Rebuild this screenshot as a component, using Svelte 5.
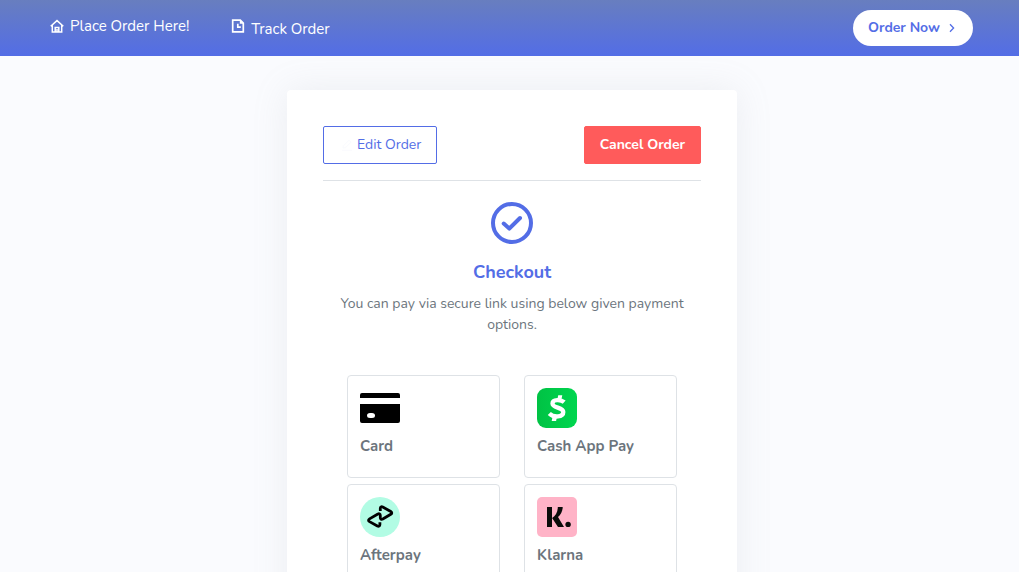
<script>
  const links = [
    { label: 'Place Order Here!', icon: 'home' },
    { label: 'Track Order', icon: 'file' }
  ];

  const payments = [
    { id: 'card', label: 'Card' },
    { id: 'cashapp', label: 'Cash App Pay' },
    { id: 'afterpay', label: 'Afterpay' },
    { id: 'klarna', label: 'Klarna' }
  ];
</script>

<header class="topbar">
  <nav>
    {#each links as link}
      <a class="nav-link {link.icon}" href="#{link.icon}">
        {#if link.icon === 'home'}
          <svg width="14" height="14" viewBox="0 0 14 14" fill="none" stroke="currentColor" stroke-width="1.5">
            <path d="M.7 7.2 7 1.6l6.3 5.6M2.3 6v6.9h9.4V6M5.2 12.9V8.6h3.6v4.3M7 10v3" />
          </svg>
        {:else}
          <svg width="14" height="14" viewBox="0 0 14 14" fill="none" stroke="currentColor" stroke-width="1.7">
            <path d="M1.7 1.2h7.6l3 3v8.6H1.7zM6.8 4.7v3.5h3" />
            <path d="M8.8 1v3.8h3.7" fill="currentColor" stroke="none" />
          </svg>
        {/if}
        <span>{link.label}</span>
      </a>
    {/each}
  </nav>
  <a class="order-now" href="#order">
    Order Now
    <svg width="8" height="10" viewBox="0 0 8 10" fill="none" stroke="currentColor" stroke-width="1.3">
      <path d="m2 1.3 3.6 3.7L2 8.7" />
    </svg>
  </a>
</header>

<main>
  <section class="card">
    <div class="actions">
      <button class="btn outline" type="button">
        <svg width="12" height="12" viewBox="0 0 12 12" fill="none" stroke="currentColor">
          <path d="M1 11.3h10M2 9l.4-2.2L8 1.2l2 2-5.6 5.4z" />
        </svg>
        Edit Order
      </button>
      <button class="btn danger" type="button">Cancel Order</button>
    </div>

    <div class="intro">
      <svg width="42" height="42" viewBox="0 0 42 42" fill="none" stroke="currentColor" stroke-width="4">
        <circle cx="21" cy="21" r="19" />
        <path d="m12.7 21.5 5.6 5.1L29 16" stroke-linecap="round" stroke-linejoin="round" />
      </svg>
      <h1>Checkout</h1>
      <p>You can pay via secure link using below given payment options.</p>
    </div>

    <div class="options">
      {#each payments as payment}
        <button class="option" type="button">
          <svg width="40" height="40" viewBox="0 0 40 40">
            {#if payment.id === 'card'}
              <path d="M0 10V7q0-2 2-2h36q2 0 2 2v3zM0 16h40v17q0 2-2 2H2q-2 0-2-2z" />
              <rect x="7" y="20" width="8" height="5" rx="3" fill="#fff" transform="translate(0 5)" />
            {:else if payment.id === 'cashapp'}
              <defs>
                <linearGradient id="cash">
                  <stop stop-color="#00c244" />
                  <stop offset="1" stop-color="#00d64f" />
                </linearGradient>
              </defs>
              <rect width="40" height="40" rx="9" fill="url(#cash)" />
              <path
                d="M27.2 14.2c-3-2.7-11.7-3.2-11.7 1.2 0 5 10.8 3.4 10.8 8.7 0 5.4-9.8 5.7-14 1.4"
                fill="none" stroke="#fff" stroke-width="4.3" stroke-linejoin="round"
              />
              <path d="m21.2 7.2 4.1.1-.9 4.2-4-.2zM15.7 28.1l4.3.5-.9 4.4h-4.4z" fill="#fff" />
            {:else if payment.id === 'afterpay'}
              <circle cx="20" cy="20" r="20" fill="#b2fce4" />
              <path
                d="M20.3 14v-2.6c0-1.5 1.1-2.1 2.4-1.4l8.1 4.5c1.3.8 1.3 2 0 2.8l-8 4.7c-1.3.7-2.5.1-2.5-1.3v-2.3c0-1.5-1.1-2.2-2.4-1.4l-8.4 4.9c-1.3.8-1.3 1.9 0 2.7l7.9 4.4c1.3.7 2.5.1 2.5-1.4v-2.3"
                fill="none" stroke="#000" stroke-width="2.8" stroke-linejoin="round"
              />
            {:else}
              <rect width="40" height="40" rx="5" fill="#ffb3c7" />
              <rect x="10" y="10" width="5" height="20" fill="#0a0b09" />
              <path d="M20.8 10h4.9c0 4-1.8 7.6-4.7 10l6 10h-6l-5.9-9c3.5-2.1 5.7-6 5.7-11z" fill="#0a0b09" />
              <circle cx="31.1" cy="27.4" r="2.7" fill="#0a0b09" />
            {/if}
          </svg>
          <span>{payment.label}</span>
        </button>
      {/each}
    </div>
  </section>
</main>

<style>
  :global(body) {
    background: #fafbfe;
    color: #6c757d;
    font-family: Nunito, Lato, sans-serif;
    font-size: 15px;
    line-height: 21px;
  }

  svg {
    display: block;
    flex: none;
  }

  button {
    font: inherit;
    cursor: pointer;
  }

  .topbar {
    display: flex;
    justify-content: space-between;
    align-items: center;
    box-sizing: border-box;
    height: 56px;
    padding: 0 46px 0 50px;
    background: linear-gradient(#687ebf, #536de6);
  }

  nav {
    display: flex;
    align-items: center;
    gap: 42px;
  }

  .nav-link {
    display: flex;
    align-items: center;
    gap: 6px;
    color: #fff;
    text-decoration: none;
    padding-bottom: 4px;
  }

  .nav-link.file {
    align-items: flex-start;
    padding: 2px 0 0;
  }

  .order-now {
    display: flex;
    align-items: center;
    gap: 8px;
    padding: 8px 17px 8px 15px;
    border-radius: 20px;
    background: #fff;
    color: #536de6;
    font-size: 14px;
    font-weight: 700;
    line-height: 20px;
    text-decoration: none;
  }

  main {
    display: flex;
    justify-content: center;
    padding: 34px 0 34px 5px;
  }

  .card {
    box-sizing: border-box;
    width: 100%;
    max-width: 450px;
    padding: 36px;
    border-radius: 4px;
    background: #fff;
    box-shadow: 0 0 35px 0 rgba(154, 161, 171, 0.15);
  }

  .actions {
    display: flex;
    justify-content: space-between;
    padding-bottom: 16px;
    border-bottom: 1px solid #dee2e6;
  }

  .btn {
    display: flex;
    align-items: center;
    gap: 4px;
    padding: 8px 15px;
    border: 1px solid #536de6;
    border-radius: 2px;
    font-size: 14px;
    line-height: 20px;
  }

  .outline {
    background: #fff;
    color: #536de6;
  }

  .outline svg {
    margin-left: 2px;
    color: #fafbfe;
  }

  .danger {
    border-color: #ff5b5b;
    background: #ff5b5b;
    color: #fff;
    font-weight: 700;
  }

  .intro {
    padding: 21px 12px 0;
    text-align: center;
  }

  .intro svg {
    margin: 0 auto;
    color: #536de6;
  }

  h1 {
    margin: 18px 0 11px;
    color: #536de6;
    font-size: 18px;
    font-weight: 700;
    line-height: 20px;
  }

  p {
    margin: 0;
    font-size: 14px;
  }

  .options {
    display: grid;
    grid-template-columns: 1fr 1fr;
    gap: 6px 24px;
    padding: 40px 24px 0;
  }

  .option {
    display: flex;
    flex-direction: column;
    align-items: flex-start;
    gap: 8px;
    padding: 12px 12px 20px;
    border: 1px solid #dee2e6;
    border-radius: 4px;
    background: #fff;
    color: #6c757d;
    font-weight: 700;
  }
</style>
